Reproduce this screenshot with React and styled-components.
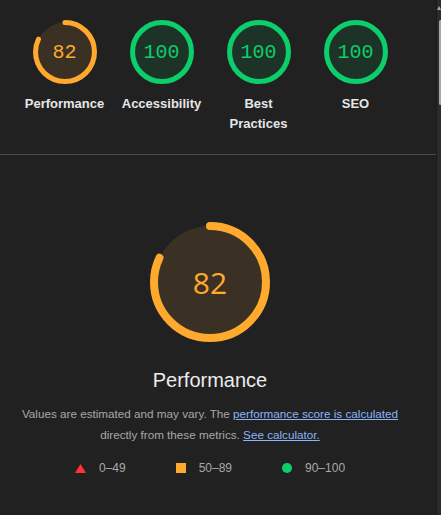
import React from 'react';
import styled, { createGlobalStyle } from 'styled-components';

const GlobalStyle = createGlobalStyle`
  html, body {
    margin: 0;
    padding: 0;
    background: #212121;
  }
  body {
    font-family: "Liberation Sans", Arial, sans-serif;
    color: #e8e8e8;
  }
`;

const colors = {
  pass: { stroke: '#0cce6b', fill: '#1e3327', text: '#0cce6b' },
  average: { stroke: '#ffa92e', fill: '#3a3124', text: '#ffa92e' },
};

const scores = [
  { id: 'perf', label: 'Performance', score: 82, tone: 'average' },
  { id: 'a11y', label: 'Accessibility', score: 100, tone: 'pass' },
  { id: 'bp', label: 'Best Practices', score: 100, tone: 'pass' },
  { id: 'seo', label: 'SEO', score: 100, tone: 'pass' },
];

const Ring = ({ score, size, stroke, tone }) => {
  const r = 60 - stroke / 2;
  const c = 2 * Math.PI * r;
  const col = colors[tone];
  return (
    <svg viewBox="0 0 120 120" width={size} height={size}>
      <circle cx="60" cy="60" r={r} fill={col.fill} />
      <circle
        cx="60"
        cy="60"
        r={r}
        fill="none"
        stroke={col.stroke}
        strokeWidth={stroke}
        strokeLinecap={score < 100 ? 'round' : 'butt'}
        strokeDasharray={`${(score / 100) * c} ${c}`}
        transform="rotate(-90 60 60)"
      />
    </svg>
  );
};

const App = () => {
  return (
    <>
      <GlobalStyle />
      <Page>
        <Main>
          <TopRow>
            {scores.map((s) => (
              <GaugeItem key={s.id}>
                <GaugeBox $size={64}>
                  <Ring score={s.score} size={64} stroke={9.5} tone={s.tone} />
                  <SmallNumber $tone={s.tone}>{s.score}</SmallNumber>
                </GaugeBox>
                <GaugeLabel>{s.label}</GaugeLabel>
              </GaugeItem>
            ))}
          </TopRow>
          <Divider />
          <Detail>
            <GaugeBox $size={120}>
              <Ring score={82} size={120} stroke={8} tone="average" />
              <BigNumber>82</BigNumber>
            </GaugeBox>
            <Title>Performance</Title>
            <Description>
              Values are estimated and may vary. The <Link>performance score is calculated</Link>
              <br />
              directly from these metrics. <Link>See calculator.</Link>
            </Description>
            <Legend>
              <LegendItem>
                <svg width="11" height="9" viewBox="0 0 11 9">
                  <polygon points="5.5,0 11,9 0,9" fill="#ff3333" />
                </svg>
                <span>0–49</span>
              </LegendItem>
              <LegendItem>
                <Square />
                <span>50–89</span>
              </LegendItem>
              <LegendItem>
                <Dot />
                <span>90–100</span>
              </LegendItem>
            </Legend>
          </Detail>
        </Main>
        <ScrollTrack>
          <ScrollArrow>▴</ScrollArrow>
          <ScrollThumb />
        </ScrollTrack>
      </Page>
    </>
  );
};

const Page = styled.div`
  display: flex;
  width: 441px;
  height: 515px;
  overflow: hidden;
  background: #212121;
`;

const Main = styled.div`
  flex: 1;
  display: flex;
  flex-direction: column;
`;

const TopRow = styled.div`
  display: grid;
  grid-template-columns: repeat(4, 97px);
  padding: 20px 32px 0 16px;
  height: 154px;
  box-sizing: border-box;
`;

const GaugeItem = styled.div`
  display: flex;
  flex-direction: column;
  align-items: center;
`;

const GaugeBox = styled.div`
  position: relative;
  width: ${(p) => p.$size}px;
  height: ${(p) => p.$size}px;
  svg {
    display: block;
  }
`;

const SmallNumber = styled.div`
  position: absolute;
  inset: 0;
  display: flex;
  align-items: center;
  justify-content: center;
  font-family: "Liberation Mono", "DejaVu Sans Mono", monospace;
  font-size: 20px;
  color: ${(p) => colors[p.$tone].text};
`;

const BigNumber = styled.div`
  position: absolute;
  inset: 0;
  display: flex;
  align-items: center;
  justify-content: center;
  font-family: "Open Sans", "Noto Sans", sans-serif;
  font-size: 30px;
  color: #ffa92e;
`;

const GaugeLabel = styled.div`
  margin-top: 10px;
  font-size: 13px;
  font-weight: bold;
  line-height: 20px;
  text-align: center;
  color: #e6e6e6;
  max-width: 80px;
`;

const Divider = styled.div`
  height: 1px;
  background: #4a4a4a;
`;

const Detail = styled.div`
  display: flex;
  flex-direction: column;
  align-items: center;
  padding: 67px 26px 0 10px;
`;

const Title = styled.div`
  margin-top: 26px;
  font-size: 20px;
  line-height: 24px;
  color: #ececec;
`;

const Description = styled.div`
  margin-top: 11px;
  font-size: 11.7px;
  line-height: 21px;
  text-align: center;
  color: #a8a8a8;
`;

const Link = styled.span`
  color: #8ab4f8;
  text-decoration: underline;
`;

const Legend = styled.div`
  display: flex;
  gap: 50px;
  margin-top: 16px;
  font-size: 12px;
  color: #a8a8a8;
`;

const LegendItem = styled.div`
  display: flex;
  align-items: center;
  gap: 13px;
`;

const Square = styled.div`
  width: 10px;
  height: 10px;
  background: #ffa92e;
`;

const Dot = styled.div`
  width: 10px;
  height: 10px;
  border-radius: 50%;
  background: #0cce6b;
`;

const ScrollTrack = styled.div`
  position: relative;
  width: 5px;
  background: #2b2b2b;
  border-left: 1px solid #1a1a1a;
`;

const ScrollArrow = styled.div`
  position: absolute;
  top: 4px;
  left: 0;
  font-size: 8px;
  color: #aaa;
  line-height: 8px;
`;

const ScrollThumb = styled.div`
  position: absolute;
  top: 20px;
  left: 2px;
  width: 3px;
  height: 85px;
  border-radius: 2px;
  background: #a8a8a8;
`;

export default App;
